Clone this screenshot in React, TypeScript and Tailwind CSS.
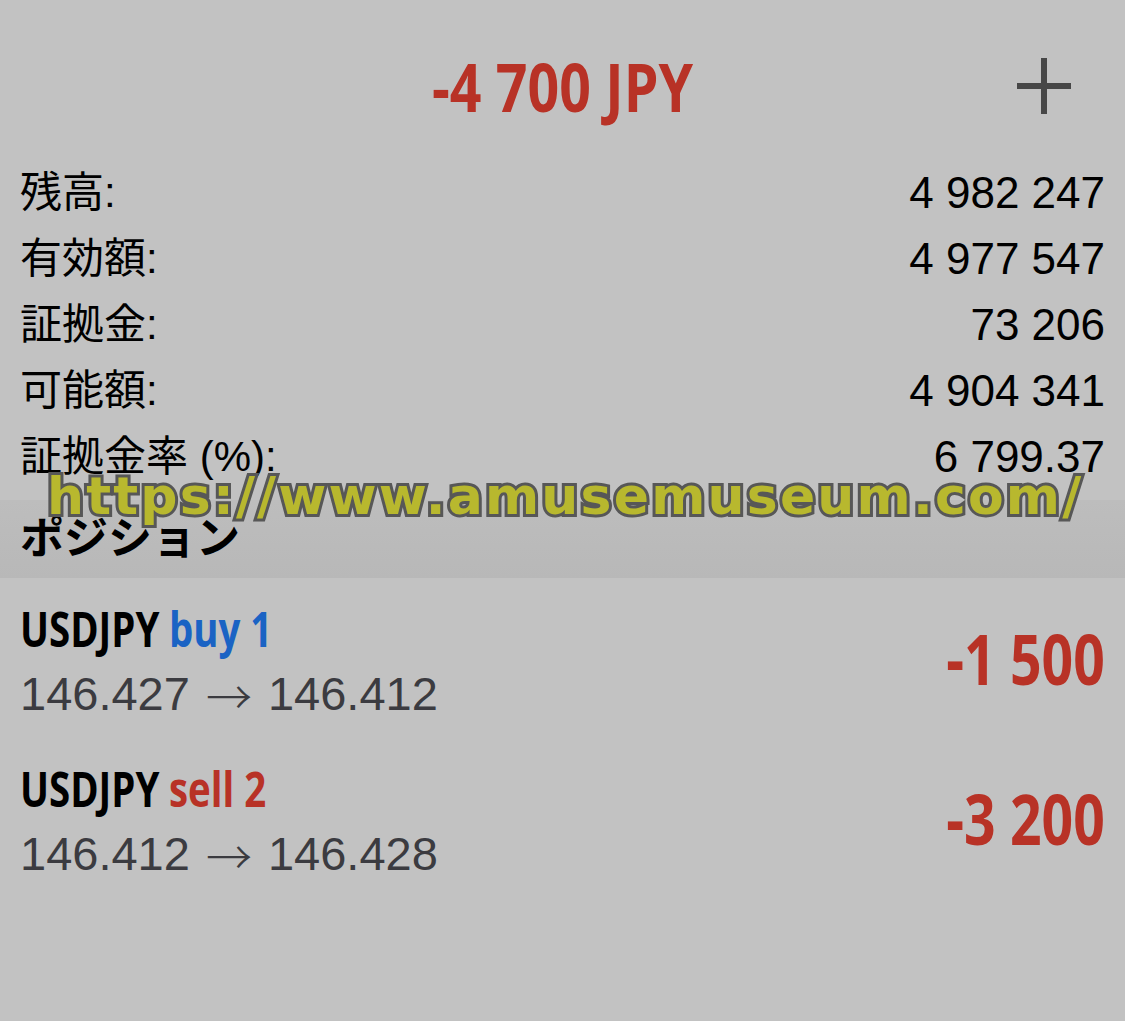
import React from 'react';

// Open Sans bold, squeezed to look like the condensed face of the app
const cond = "font-['Open_Sans',sans-serif] font-bold";
const jp = "font-['Liberation_Sans','Noto_Sans_CJK_JP',sans-serif]";

const summary = [
    { label: '残高:', value: '4 982 247' },
    { label: '有効額:', value: '4 977 547' },
    { label: '証拠金:', value: '73 206' },
    { label: '可能額:', value: '4 904 341' },
    { label: '証拠金率 (%):', value: '6 799.37' },
];

const positions = [
    { symbol: 'USDJPY', side: 'buy 1', sideColor: 'text-[#1a63c4]', open: '146.427', close: '146.412', profit: '-1 500' },
    { symbol: 'USDJPY', side: 'sell 2', sideColor: 'text-[#b83226]', open: '146.412', close: '146.428', profit: '-3 200' },
];

export default function App(): JSX.Element {
    return (
        <div className="relative min-h-[1021px] w-full overflow-hidden bg-[#c2c2c2] text-black">
            {/* header */}
            <div className="grid h-[160px] grid-cols-[1fr_auto_1fr] items-center">
                <div />
                <div className={`${cond} scale-x-[0.84] pt-[12px] text-[66px] leading-none text-[#b83226]`}>-4 700 JPY</div>
                <div className="flex justify-end pr-[54px]">
                    <svg width="54" height="56" viewBox="0 0 54 56" className="mt-[12px]">
                        <rect x="24" y="0" width="6" height="56" fill="#474747" />
                        <rect x="0" y="25" width="54" height="6" fill="#474747" />
                    </svg>
                </div>
            </div>

            {/* account summary */}
            <div className="flex flex-col">
                {summary.map((row) => (
                    <div key={row.label} className="flex h-[66px] items-center justify-between pl-[20px] pr-[20px]">
                        <span className={`${jp} text-[42px] leading-none`}>{row.label}</span>
                        <span className="font-['Liberation_Sans',sans-serif] text-[44px] leading-none">{row.value}</span>
                    </div>
                ))}
            </div>

            {/* section header */}
            <div className="mt-[10px] flex h-[78px] items-center bg-gradient-to-b from-[#bdbdbd] to-[#b8b8b8] pl-[20px]">
                <span className={`${jp} text-[44px] font-bold leading-none`}>ポジション</span>
            </div>

            {/* positions */}
            <div className="flex flex-col">
                {positions.map((p) => (
                    <div key={p.side} className="flex h-[160px] items-center justify-between pl-[20px] pr-[20px] pt-[18px] pb-[12px]">
                        <div className="flex flex-col">
                            <div className={`${cond} flex h-[65px] origin-left scale-x-[0.8] items-center gap-[12px] text-[48px] leading-none`}>
                                <span>{p.symbol}</span>
                                <span className={p.sideColor}>{p.side}</span>
                            </div>
                            <div className="flex h-[65px] items-center font-['Liberation_Sans',sans-serif] text-[47px] leading-none text-[#3b3b40]">
                                <span>{p.open}</span>
                                <span className="mx-[16px] font-['Noto_Sans_CJK_JP',sans-serif] text-[46px] font-light">→</span>
                                <span>{p.close}</span>
                            </div>
                        </div>
                        <div className={`${cond} origin-right scale-x-[0.79] pb-[6px] text-[70px] leading-none text-[#b83226]`}>{p.profit}</div>
                    </div>
                ))}
            </div>

            {/* watermark overlay */}
            <div className="pointer-events-none absolute left-[47px] top-[470px] font-['DejaVu_Sans',sans-serif] text-[52px] font-bold leading-none tracking-[2.2px] text-[#b8b82e] [-webkit-text-stroke:6px_#575757] [paint-order:stroke_fill]">
                https://www.amusemuseum.com/
            </div>
        </div>
    );
}
